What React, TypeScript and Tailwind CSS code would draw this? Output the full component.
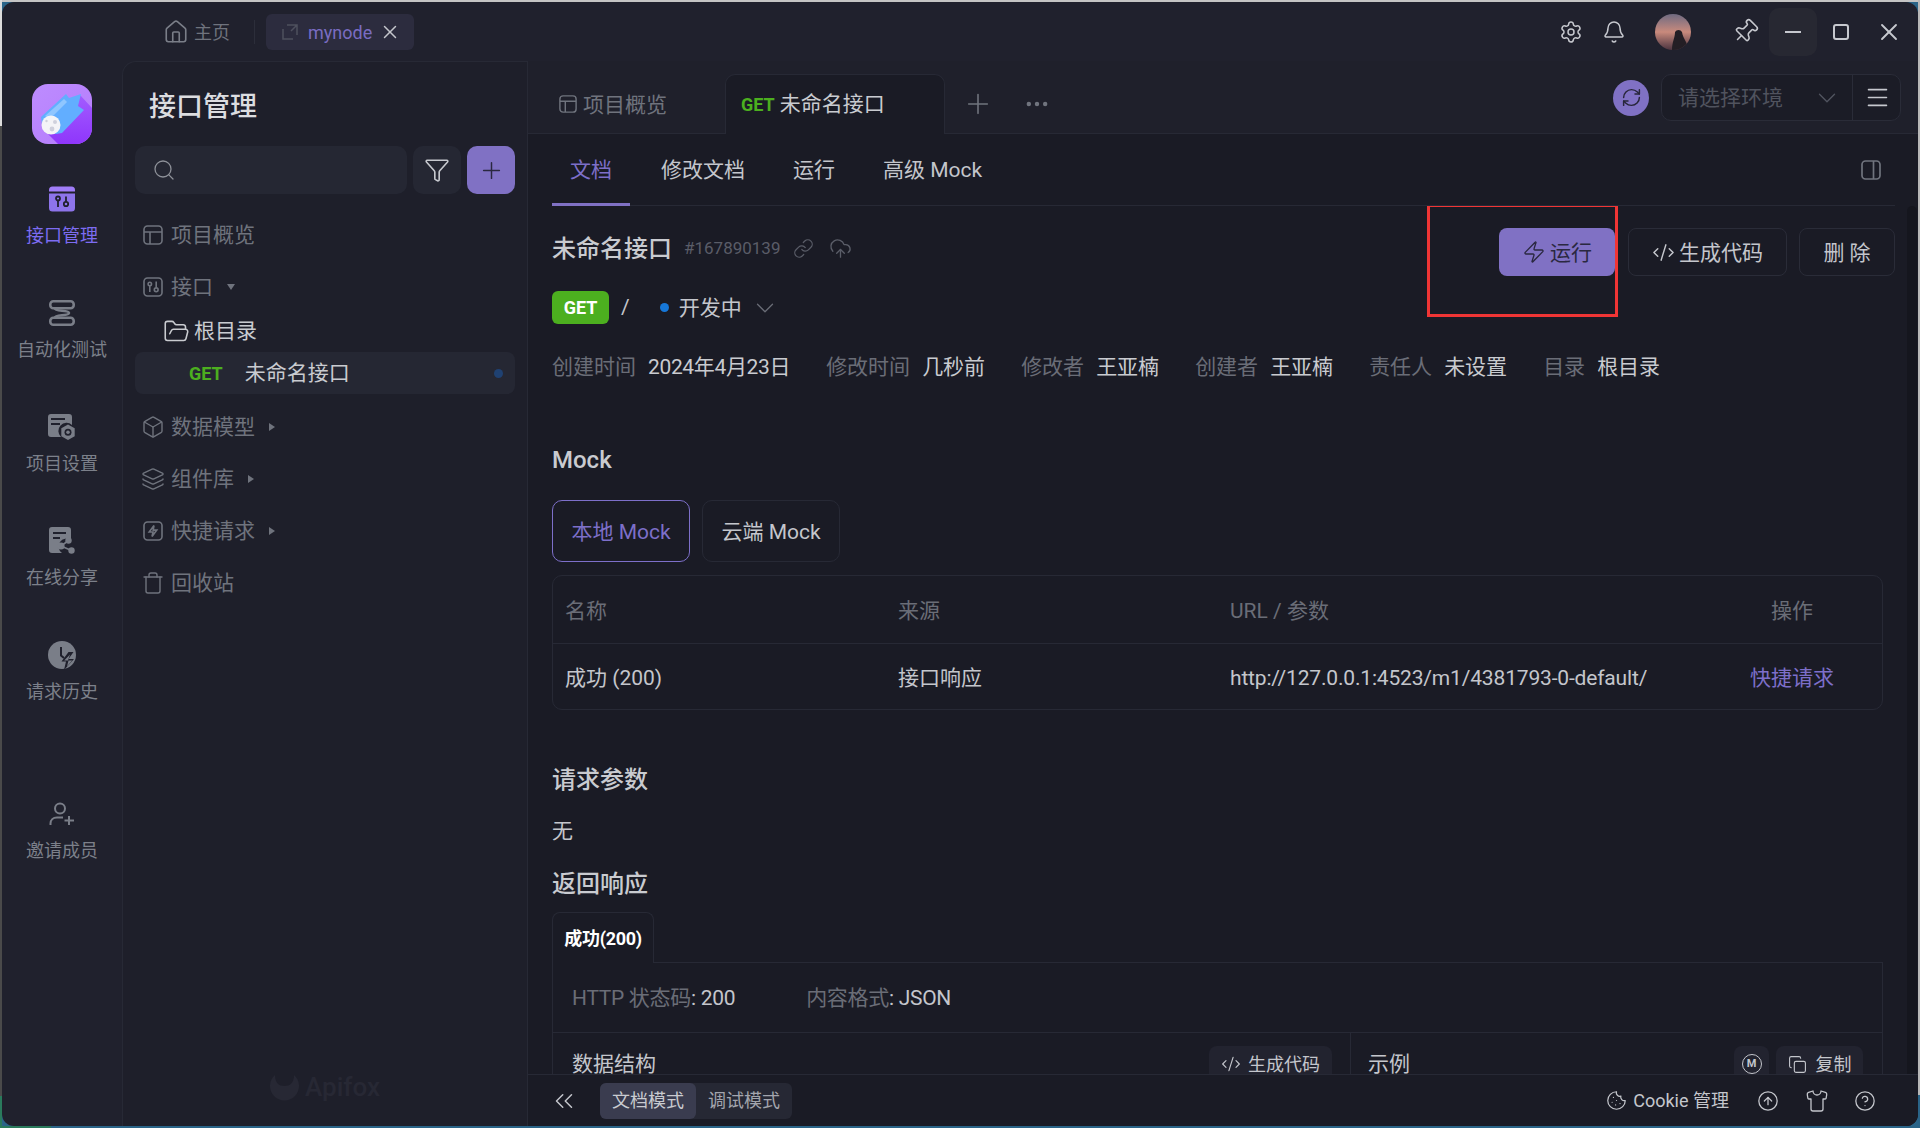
import React from "react";
import {
  House, Settings, Bell, Pin, X, Search, Funnel, Plus, Ellipsis, ChevronDown, Menu, Zap, Link, CloudUpload,
  Box, Layers, FolderOpen, Trash, ChevronsLeft, Cookie, CircleArrowUp, Shirt, CircleHelp, Copy, CodeXml, RefreshCw,
} from "lucide-react";

function OverviewIcon({ size = 20, className = "" }: { size?: number; className?: string }) {
  return (
    <svg width={size} height={size} viewBox="0 0 20 20" fill="none" stroke="currentColor" strokeWidth="1.6" className={className}>
      <rect x="1" y="1" width="18" height="18" rx="3.5" />
      <path d="M1 7h18M7 7v12" />
    </svg>
  );
}
function ApiIcon() {
  return (
    <svg width="20" height="20" viewBox="0 0 20 20" fill="none" stroke="currentColor" strokeWidth="1.6">
      <rect x="1" y="1" width="18" height="18" rx="3.5" />
      <circle cx="6.8" cy="7" r="1.7" />
      <path d="M6.8 9v6M13.2 4.5v6" />
      <circle cx="13.2" cy="12.8" r="1.9" />
    </svg>
  );
}
function QuickIcon() {
  return (
    <svg width="20" height="20" viewBox="0 0 20 20" fill="none" stroke="currentColor" strokeWidth="1.6">
      <rect x="1" y="1" width="18" height="18" rx="3.5" />
      <path d="M11 4.5 6.2 11H10l-1 4.5 4.8-6.4H10.2L11 4.5Z" />
    </svg>
  );
}
function RailApi() {
  return (
    <svg width="26" height="26" viewBox="0 0 26 26">
      <path d="M0 5.5V4a3.5 3.5 0 0 1 3.5-3.5h19A3.5 3.5 0 0 1 26 4v1.5Z" fill="#a07df8" />
      <path d="M0 7.5h26V22a3.5 3.5 0 0 1-3.5 3.5h-19A3.5 3.5 0 0 1 0 22Z" fill="#8d74ea" />
      <g fill="none" stroke="#20212d" strokeWidth="1.8">
        <circle cx="9" cy="12.5" r="2" />
        <path d="M9 15v6M17 10.5v5" />
        <circle cx="17" cy="18" r="2.2" />
      </g>
    </svg>
  );
}
function RailAuto() {
  return (
    <svg width="26" height="26" viewBox="0 0 26 26" fill="none" stroke="#7a7e88" strokeWidth="2.6">
      <rect x="1.3" y="1.3" width="23.4" height="7" rx="3" />
      <rect x="1.3" y="17.7" width="23.4" height="7" rx="3" />
      <path d="M6 8.5c0 3 14 1.5 14 4.5s-14 1.5-14 4.5" />
    </svg>
  );
}
function RailSettings() {
  return (
    <svg width="28" height="28" viewBox="0 0 28 28">
      <path d="M3 1h18a3 3 0 0 1 3 3v8a8 8 0 0 0-11 12H3a3 3 0 0 1-3-3V4a3 3 0 0 1 3-3Z" fill="#7a7e88" />
      <path d="M3 6h14M3 11h9" stroke="#20212d" strokeWidth="2" />
      <path d="M20 11.5l6.7 3.8v8L20 27l-6.7-3.7v-8Z" fill="#7a7e88" />
      <circle cx="20" cy="19.2" r="3.5" fill="#20212d" />
      <circle cx="20" cy="19.2" r="1.8" fill="#7a7e88" />
    </svg>
  );
}
function RailShare() {
  return (
    <svg width="26" height="28" viewBox="0 0 26 28">
      <path d="M3 0h16a3 3 0 0 1 3 3v10a7 7 0 0 0-9 13H3a3 3 0 0 1-3-3V3a3 3 0 0 1 3-3Z" fill="#7a7e88" />
      <path d="M4 6h13M4 11h7" stroke="#20212d" strokeWidth="2" />
      <circle cx="19.5" cy="13.5" r="3.2" fill="#7a7e88" />
      <circle cx="22.5" cy="23.5" r="3.2" fill="#7a7e88" />
      <circle cx="12" cy="19" r="3.6" fill="#7a7e88" />
      <path d="M19.5 13.5 12 19l10.5 4.5" stroke="#7a7e88" strokeWidth="1.6" fill="none" />
    </svg>
  );
}
function RailHistory() {
  return (
    <svg width="28" height="29" viewBox="0 0 28 29">
      <circle cx="14" cy="14" r="14" fill="#7a7e88" />
      <path d="M13 6v8.500l3 2.500" stroke="#20212d" strokeWidth="2" fill="none" />
      <path d="M20.500 11 13.500 20.500H18L16 29l10-11h-5.500L25.500 11Z" fill="#20212d" />
      <path d="M22 13.500 16.200 19.500H20.500L19 25.500l5.200-6H20Z" fill="#7a7e88" />
    </svg>
  );
}
function RailInvite() {
  return (
    <svg width="26" height="24" viewBox="0 0 26 24" fill="none" stroke="#7a7e88" strokeWidth="2">
      <circle cx="11" cy="6.5" r="5" />
      <path d="M1.5 23v-1.500C1.500 18 4 15.500 8 15.500h6M20 14v9M15.500 18.500H25" />
    </svg>
  );
}
function Logo() {
  return (
    <svg width="60" height="60" viewBox="0 0 60 60">
      <defs>
        <linearGradient id="lg" x1="0" y1="0" x2="1" y2="1">
          <stop offset="0" stopColor="#bd8cff" />
          <stop offset="1" stopColor="#b57cfb" />
        </linearGradient>
        <linearGradient id="lh" x1="0" y1="0" x2="0" y2="1">
          <stop offset="0" stopColor="#a25cff" />
          <stop offset="1" stopColor="#8f36fb" />
        </linearGradient>
      </defs>
      <rect width="60" height="60" rx="16" fill="url(#lg)" />
      <path d="M48 11 60 24V44a16 16 0 0 1-16 16H26L14 48Z" fill="url(#lh)" />
      <path d="M9 33 34 10l3 4 12-4-3 12 6 4-22 23-6 1-14-9Z" fill="#62aeff" />
      <path d="M13 32 32 15l3 3-17 17Z" fill="#8fc6ff" />
      <circle cx="19" cy="41" r="9.500" fill="#f4f4f7" />
      <circle cx="23" cy="38" r="2" fill="#cfd0dc" />
      <circle cx="20" cy="45" r="2.400" fill="#cfd0dc" />
      <circle cx="14.500" cy="37" r="1.200" fill="#cfd0dc" />
    </svg>
  );
}

const rail = [
  { icon: <RailApi />, label: "接口管理", active: true },
  { icon: <RailAuto />, label: "自动化测试" },
  { icon: <RailSettings />, label: "项目设置" },
  { icon: <RailShare />, label: "在线分享" },
  { icon: <RailHistory />, label: "请求历史" },
];

function RailItem({ icon, label, active }: { icon: React.ReactNode; label: string; active?: boolean }) {
  return (
    <div className="flex h-[114px] flex-col items-center pt-[3px]">
      <div className="flex h-[30px] items-center">{icon}</div>
      <div className={`mt-[10px] text-[18px] leading-[24px] ${active ? "text-[#7d6cf2]" : "text-[#7c808a]"}`}>{label}</div>
    </div>
  );
}

function TreeRow({ icon, label, arrow }: { icon: React.ReactNode; label: string; arrow?: "down" | "right" }) {
  return (
    <div className="flex h-[52px] items-center pl-[8px] text-[21px] text-[#6f737d]">
      <span className="flex w-[28px] shrink-0">{icon}</span>
      <span className="pt-[2px]">{label}</span>
      {arrow === "down" && <span className="ml-[14px] h-0 w-0 border-x-[4px] border-t-[6px] border-x-transparent border-t-[#6f737d]" />}
      {arrow === "right" && <span className="ml-[14px] h-0 w-0 border-y-[4px] border-l-[6px] border-y-transparent border-l-[#6f737d]" />}
    </div>
  );
}

function MetaPair({ k, v, tight }: { k: string; v: string; tight?: boolean }) {
  return (
    <div className="flex gap-[12px] pt-[1px]">
      <span className="text-[#6a6d77]">{k}</span>
      <span className={tight ? "tracking-[-0.35px] text-[#c9cbd0]" : "text-[#c9cbd0]"}>{v}</span>
    </div>
  );
}

export default function App() {
  return (
    <div className="relative h-[1128px] w-[1920px] overflow-hidden bg-[#2a6488] font-['Roboto','Noto_Sans_CJK_SC',sans-serif] p-[2px]">
      <div className="absolute left-0 top-0 h-[2px] w-full bg-[#c4c4c4]" />
      <div className="absolute left-0 top-0 h-[126px] w-[2px] bg-[#dcdcdc]" />
      <div className="absolute left-0 top-[126px] h-[970px] w-[2px] bg-[#4a4a4a]" />
      <div className="absolute left-0 top-[1096px] h-[32px] w-[2px] bg-[#2a7a5c]" />
      <div className="absolute bottom-0 left-0 h-[2px] w-[51px] bg-[#2a7a5c]" />
      <div className="absolute right-0 top-0 h-[1095px] w-[2px] bg-[#b8b8b8]" />

      <div className="relative flex h-[1124px] flex-col overflow-hidden rounded-[12px] bg-[#20212d]">
        {/* title bar */}
        <div className="flex h-[59px] shrink-0 items-center pl-[161px] pr-[5px]">
          <House size={26} strokeWidth={1.5} className="text-[#7a7e88]" />
          <span className="ml-[5px] pt-[1px] text-[18px] text-[#6f737d]">主页</span>
          <span className="ml-[24px] h-[24px] w-px bg-[#2c2e3a]" />
          <div className="ml-[11px] flex h-[36px] w-[148px] items-center rounded-[6px] bg-[#2c2c3e] pl-[16px]">
            <svg width="16" height="16" viewBox="0 0 16 16" fill="none" stroke="#4e505e" strokeWidth="1.5">
              <path d="M5 1h10v10M15 1 9 7M11 15H1V5" />
            </svg>
            <span className="ml-[10px] pt-[1px] text-[18px] text-[#7a6cc2]">mynode</span>
            <X size={22} strokeWidth={1.6} className="ml-[7px] text-[#c4c6cc]" />
          </div>
          <div className="flex-1" />
          <Settings size={24} strokeWidth={1.5} className="text-[#c6c8ce]" />
          <Bell size={24} strokeWidth={1.5} className="ml-[19px] text-[#c6c8ce]" />
          <div className="relative ml-[29px] h-[36px] w-[36px] overflow-hidden rounded-full bg-gradient-to-b from-[#6f6a80] via-[#c98a7c] to-[#4d3540]">
            <svg width="36" height="36" viewBox="0 0 36 36" className="absolute inset-0">
              <path d="M17 36c0-8 3-12 3-18a4 4 0 0 1 7 0c1 7 6 10 6 18Z" fill="#231e24" />
            </svg>
          </div>
          <Pin size={27} strokeWidth={1.4} className="ml-[41px] rotate-45 text-[#c6c8ce]" />
          <div className="ml-[10px] flex h-[48px] w-[48px] items-center justify-center rounded-[10px] bg-[#272832]">
            <span className="h-[2px] w-[16px] bg-[#c6c8ce]" />
          </div>
          <div className="flex h-[48px] w-[48px] items-center justify-center">
            <span className="h-[16px] w-[16px] rounded-[3px] border-2 border-[#c6c8ce]" />
          </div>
          <div className="flex h-[48px] w-[48px] items-center justify-center">
            <X size={28} strokeWidth={1.6} className="text-[#c6c8ce]" />
          </div>
        </div>

        {/* body */}
        <div className="flex min-h-0 flex-1">
          {/* rail */}
          <div className="flex w-[120px] shrink-0 flex-col items-stretch">
            <div className="ml-[30px] mt-[23px] mb-[37px] h-[60px] w-[60px]"><Logo /></div>
            {rail.map((r) => (
              <RailItem key={r.label} icon={r.icon} label={r.label} active={r.active} />
            ))}
            <div className="mt-[45px]"><RailItem icon={<RailInvite />} label="邀请成员" /></div>
          </div>

          {/* tree panel */}
          <div className="flex w-[406px] shrink-0 flex-col rounded-tl-[14px] border-l border-t border-r border-[#272935] bg-[#1e1f2a] px-[12px]">
            <div className="h-[84px] pl-[14px] pt-[25px] text-[27px] leading-[40px] font-medium text-[#dcdde0]">接口管理</div>
            <div className="flex h-[48px] gap-[6px]">
              <div className="flex w-[272px] items-center rounded-[10px] bg-[#252733] pl-[17px]">
                <Search size={24} strokeWidth={1.3} className="text-[#8d9098]" />
              </div>
              <div className="flex w-[48px] items-center justify-center rounded-[10px] bg-[#252733]">
                <Funnel size={26} strokeWidth={1.5} className="text-[#c6c8ce]" />
              </div>
              <div className="flex w-[48px] items-center justify-center rounded-[10px] bg-[#8071c4]">
                <Plus size={27} strokeWidth={1.3} className="text-[#2a2840]" />
              </div>
            </div>
            <div className="mt-[15px]">
              <TreeRow icon={<OverviewIcon />} label="项目概览" />
              <TreeRow icon={<ApiIcon />} label="接口" arrow="down" />
              <div className="flex h-[39px] items-center pb-[2px] pl-[28px] text-[21px] text-[#c9cbd0]">
                <FolderOpen size={27} strokeWidth={1.4} />
                <span className="ml-[4px] pt-[1px]">根目录</span>
              </div>
              <div className="flex h-[42px] items-center rounded-[8px] bg-[#252733] pl-[54px] pr-[12px]">
                <span className="text-[18px] font-bold text-[#4caf1f]">GET</span>
                <span className="ml-[22px] flex-1 pt-[2px] text-[21px] text-[#c9cbd0]">未命名接口</span>
                <span className="h-[9px] w-[9px] rounded-full bg-[#1f4172]" />
              </div>
              <div className="mt-[7px]">
                <TreeRow icon={<Box size={24} strokeWidth={1.4} className="-ml-[2px]" />} label="数据模型" arrow="right" />
                <TreeRow icon={<Layers size={24} strokeWidth={1.4} className="-ml-[2px]" />} label="组件库" arrow="right" />
                <TreeRow icon={<QuickIcon />} label="快捷请求" arrow="right" />
                <TreeRow icon={<Trash size={24} strokeWidth={1.4} className="-ml-[2px]" />} label="回收站" />
              </div>
            </div>
            <div className="mt-auto mb-[19px] flex items-center justify-center gap-[6px] text-[#272834]">
              <svg width="29" height="29" viewBox="0 0 29 29" fill="currentColor">
                <path d="M5 2c0 8 4 11 9.500 11S24 10 24 2a14.500 14.500 0 1 1-19 0Z" />
              </svg>
              <span className="text-[26px] leading-[40px] font-medium">Apifox</span>
            </div>
          </div>

          {/* main */}
          <div className="flex min-w-0 flex-1 flex-col bg-[#1a1b25]">
            {/* tabs bar */}
            <div className="flex h-[73px] shrink-0 items-end border-b border-[#272935] bg-[#1f202b] pr-[17px]">
              <div className="ml-[31px] flex h-[58px] w-[166px] items-center text-[21px] text-[#6f737d]">
                <OverviewIcon size={18} />
                <span className="ml-[6px] pt-[3px]">项目概览</span>
              </div>
              <div className="-mb-px flex h-[60px] w-[220px] items-center rounded-t-[10px] border-x border-t border-[#272935] bg-[#1a1b25] pl-[15px]">
                <span className="text-[18px] font-bold text-[#4caf1f]">GET</span>
                <span className="ml-[5px] text-[21px] text-[#c9cbd0]">未命名接口</span>
              </div>
              <div className="flex h-[58px] items-center">
                <Plus size={32} strokeWidth={1.2} className="ml-[17px] text-[#70747e]" />
                <Ellipsis size={28} strokeWidth={1.8} className="ml-[29px] text-[#70747e]" />
              </div>
              <div className="flex-1" />
              <div className="mb-[12px] flex items-center">
                <div className="mr-[12px] flex h-[36px] w-[36px] items-center justify-center rounded-full bg-[#8071c4]">
                  <RefreshCw size={21} strokeWidth={1.7} className="text-[#27263a]" />
                </div>
                <div className="flex h-[47px] w-[240px] items-center rounded-[10px] border border-[#2a2c38] bg-[#1b1c26]">
                  <span className="ml-[16px] flex-1 pt-[2px] text-[21px] text-[#50535e]">请选择环境</span>
                  <ChevronDown size={30} strokeWidth={1.1} className="mr-[10px] text-[#50535e]" />
                  <div className="flex h-full w-[48px] items-center justify-center border-l border-[#2a2c38] pl-[2px]">
                    <Menu size={27} strokeWidth={1.4} className="text-[#c6c8ce]" />
                  </div>
                </div>
              </div>
            </div>

            {/* sub tabs */}
            <div className="ml-[24px] mr-[23px] flex h-[72px] shrink-0 items-stretch border-b border-[#272935] text-[21px] text-[#c4c6cc]">
              <div className="-mb-px flex items-center border-b-[3px] border-[#8071c4] px-[18px] pt-[5px] text-[#7d6fc9]">文档</div>
              <div className="ml-[14px] flex items-center px-[17px] pt-[2px]">修改文档</div>
              <div className="ml-[14px] flex items-center px-[17px] pt-[2px]">运行</div>
              <div className="ml-[14px] flex items-center px-[17px] pt-[2px]">高级 Mock</div>
              <div className="flex-1" />
              <div className="flex items-center pr-[14px]">
                <svg width="20" height="20" viewBox="0 0 20 20" fill="none" stroke="#70747e" strokeWidth="1.7">
                  <rect x="1" y="1" width="18" height="18" rx="3.500" />
                  <path d="M12.500 1v18" />
                </svg>
              </div>
            </div>

            {/* content */}
            <div className="relative min-h-0 flex-1 overflow-hidden pl-[24px] pr-[35px]">
              <div className="absolute right-[1px] top-0 h-full w-[10px] rounded-t-[5px] bg-[#15161e]" />
              <div className="-mr-[12px] mt-[22px] flex h-[48px] items-start">
                <span className="pt-[1px] text-[24px] leading-[40px] font-medium text-[#c9cbd0]">未命名接口</span>
                <span className="ml-[12px] text-[17px] leading-[40px] text-[#5a5d68]">#167890139</span>
                <Link size={21} strokeWidth={1.4} className="ml-[13px] mt-[10px] text-[#5a5d68]" />
                <CloudUpload size={23} strokeWidth={1.4} className="ml-[15px] mt-[9px] text-[#5a5d68]" />
                <div className="flex-1" />
                <button className="relative flex h-[48px] w-[116px] items-center justify-center gap-[4px] rounded-[8px] bg-[#8071c4] pt-[3px] text-[21px] text-[#2a2840]">
                  <Zap size={24} strokeWidth={1.4} className="-mt-[3px]" />
                  运行
                  <span className="absolute left-[-72px] top-[-24px] h-[113px] w-[191px] border-[3px] border-[#f03535]" />
                </button>
                <button className="ml-[13px] flex h-[48px] w-[159px] items-center justify-center gap-[4px] rounded-[8px] border border-[#2a2c38] pt-[3px] text-[21px] text-[#c4c6cc]">
                  <CodeXml size={23} strokeWidth={1.5} className="-mt-[3px]" />
                  生成代码
                </button>
                <button className="ml-[12px] flex h-[48px] w-[96px] items-center justify-center rounded-[8px] border border-[#2a2c38] pt-[3px] text-[21px] text-[#c4c6cc]">
                  删 除
                </button>
              </div>

              <div className="mt-[15px] flex h-[33px] items-center text-[21px] text-[#c4c6cc]">
                <span className="flex h-[33px] w-[57px] items-center justify-center rounded-[6px] bg-[#4caf1f] text-[18px] font-bold text-white">GET</span>
                <span className="ml-[12px]">/</span>
                <span className="ml-[30px] h-[9px] w-[9px] rounded-full bg-[#1677d8]" />
                <span className="ml-[10px] pt-[2px]">开发中</span>
                <ChevronDown size={30} strokeWidth={1} className="ml-[8px] text-[#6a6d77]" />
              </div>

              <div className="mt-[27px] flex h-[32px] items-center gap-[36px] text-[21px]">
                <MetaPair k="创建时间" v="2024年4月23日" tight />
                <MetaPair k="修改时间" v="几秒前" />
                <MetaPair k="修改者" v="王亚楠" />
                <MetaPair k="创建者" v="王亚楠" />
                <MetaPair k="责任人" v="未设置" />
                <MetaPair k="目录" v="根目录" />
              </div>

              <div className="mt-[57px] text-[24px] leading-[40px] font-medium text-[#c9cbd0]">Mock</div>
              <div className="mt-[20px] flex h-[62px] gap-[12px] text-[21px]">
                <div className="flex w-[138px] items-center justify-center rounded-[10px] border border-[#7d6fc9] pt-[3px] text-[#7d6fc9]">本地 Mock</div>
                <div className="flex w-[138px] items-center justify-center rounded-[10px] border border-[#272935] pt-[3px] text-[#c4c6cc]">云端 Mock</div>
              </div>

              <div className="mt-[13px] h-[135px] rounded-[10px] border border-[#272935] text-[21px]">
                <div className="grid h-[68px] grid-cols-[333px_332px_1fr_140px] items-center border-b border-[#272935] pt-[4px] text-[#6a6d77]">
                  <span className="pl-[12px]">名称</span>
                  <span className="pl-[12px]">来源</span>
                  <span className="pl-[12px]">URL / 参数</span>
                  <span className="pr-[40px] text-center">操作</span>
                </div>
                <div className="grid h-[65px] grid-cols-[333px_332px_1fr_140px] items-center pt-[4px] text-[#c4c6cc]">
                  <span className="pl-[12px]">成功 (200)</span>
                  <span className="pl-[12px]">接口响应</span>
                  <span className="pl-[12px] tracking-[-0.17px]">http://127.0.0.1:4523/m1/4381793-0-default/</span>
                  <span className="pr-[40px] text-center text-[#7d6fc9]">快捷请求</span>
                </div>
              </div>

              <div className="mt-[50px] text-[24px] leading-[40px] font-medium text-[#c9cbd0]">请求参数</div>
              <div className="mt-[15px] text-[21px] leading-[32px] text-[#c4c6cc]">无</div>
              <div className="mt-[17px] text-[24px] leading-[40px] font-medium text-[#c9cbd0]">返回响应</div>
              <div className="relative z-10 -mb-px mt-[8px] flex h-[51px] w-[102px] items-center justify-center rounded-t-[8px] border-x border-t border-[#272935] bg-[#1a1b25] text-[18px] font-bold tracking-[-0.3px] text-white">成功(200)</div>
              <div className="border border-[#272935] text-[21px]">
                <div className="flex h-[70px] items-center border-b border-[#272935] pl-[19px] pt-[3px] tracking-[-0.3px] text-[#6a6d77]">
                  <span>HTTP 状态码<span className="text-[#c4c6cc]">: 200</span></span>
                  <span className="ml-[71px]">内容格式<span className="text-[#c4c6cc]">: JSON</span></span>
                </div>
                <div className="flex h-[80px]">
                  <div className="flex w-[798px] items-start justify-between border-r border-[#272935] pl-[19px] pr-[18px] pt-[13px]">
                    <span className="text-[21px] leading-[36px] text-[#c4c6cc]">数据结构</span>
                    <div className="flex h-[36px] w-[123px] items-center justify-center gap-[7px] rounded-[8px] bg-[#22232f] text-[18px] text-[#c4c6cc]">
                      <CodeXml size={20} strokeWidth={1.4} />生成代码
                    </div>
                  </div>
                  <div className="flex flex-1 items-start pl-[17px] pr-[19px] pt-[13px]">
                    <span className="flex-1 text-[21px] leading-[36px] text-[#c4c6cc]">示例</span>
                    <div className="flex h-[36px] w-[35px] items-center justify-center rounded-[8px] bg-[#22232f]">
                      <span className="flex h-[20px] w-[20px] items-center justify-center rounded-full border border-[#c4c6cc] text-[11px] font-bold text-[#c4c6cc]">M</span>
                    </div>
                    <div className="ml-[7px] flex h-[36px] w-[87px] items-center justify-center gap-[9px] rounded-[8px] bg-[#22232f] text-[18px] text-[#c4c6cc]">
                      <Copy size={19} strokeWidth={1.4} />复制
                    </div>
                  </div>
                </div>
              </div>
            </div>

            {/* bottom bar */}
            <div className="flex h-[52px] shrink-0 items-center border-t border-[#272935] bg-[#1a1b25] pl-[21px] pr-[42px]">
              <ChevronsLeft size={30} strokeWidth={1.2} className="text-[#c4c6cc]" />
              <div className="ml-[21px] flex h-[36px] w-[192px] rounded-[6px] bg-[#262834] text-[18px]">
                <span className="flex w-[96px] items-center justify-center rounded-[6px] bg-[#3a3c4f] text-[#c9cbd0]">文档模式</span>
                <span className="flex flex-1 items-center justify-center text-[#a3a5ad]">调试模式</span>
              </div>
              <div className="flex-1" />
              <Cookie size={21} strokeWidth={1.4} className="text-[#c4c6cc]" />
              <span className="ml-[6px] text-[18px] text-[#c4c6cc]">Cookie 管理</span>
              <CircleArrowUp size={22} strokeWidth={1.4} className="ml-[28px] text-[#c4c6cc]" />
              <Shirt size={24} strokeWidth={1.3} className="ml-[26px] text-[#c4c6cc]" />
              <CircleHelp size={22} strokeWidth={1.4} className="ml-[25px] text-[#c4c6cc]" />
            </div>
          </div>
        </div>
      </div>
    </div>
  );
}
